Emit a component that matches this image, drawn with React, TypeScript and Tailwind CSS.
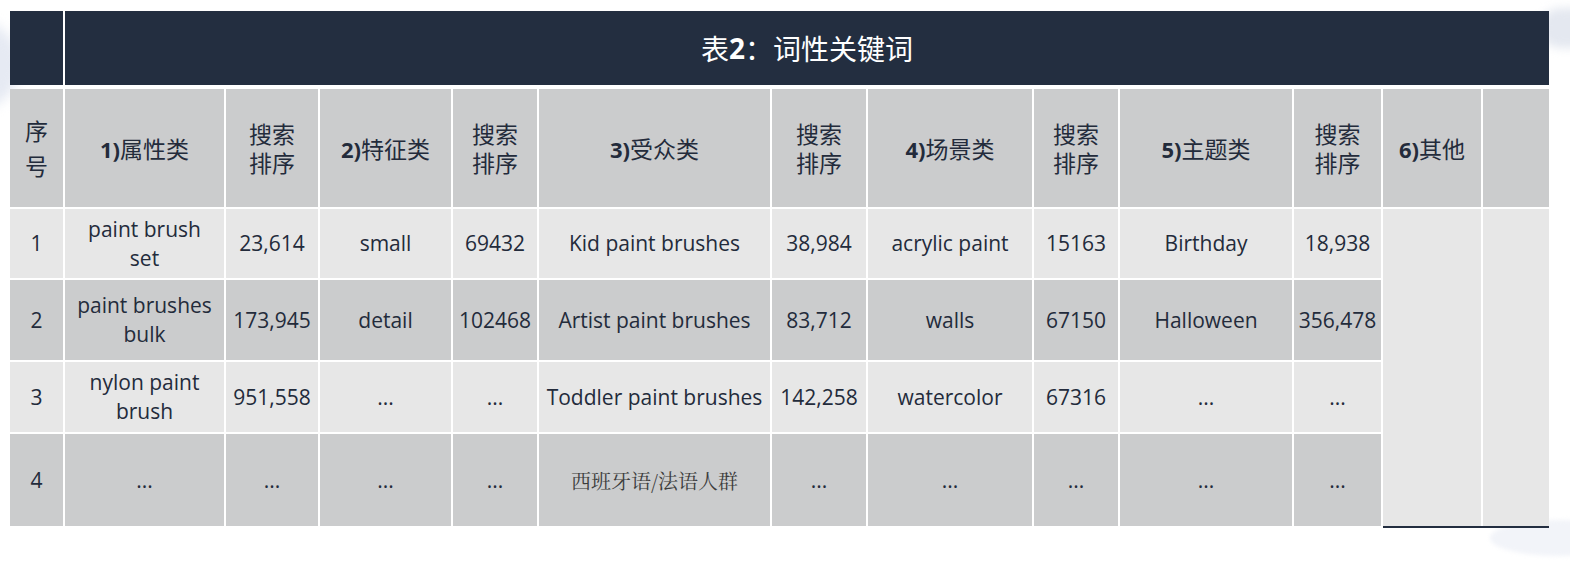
import React from "react";

const LATIN = "font-['Open_Sans','Noto_Sans_CJK_SC',sans-serif]";
const CJK = "font-['Noto_Sans_CJK_SC',sans-serif]";

const light = "bg-[#e7e7e7]";
const dark = "bg-[#cbcccd]";

type Row = { bg: string; cells: React.ReactNode[] };

const rows: Row[] = [
  {
    bg: light,
    cells: ["1", <>paint brush<br />set</>, "23,614", "small", "69432", "Kid paint brushes", "38,984", "acrylic paint", "15163", "Birthday", "18,938"],
  },
  {
    bg: dark,
    cells: ["2", <>paint brushes<br />bulk</>, "173,945", "detail", "102468", "Artist paint brushes", "83,712", "walls", "67150", "Halloween", "356,478"],
  },
  {
    bg: light,
    cells: ["3", <>nylon paint<br />brush</>, "951,558", "...", "...", "Toddler paint brushes", "142,258", "watercolor", "67316", "...", "..."],
  },
  {
    bg: dark,
    cells: [
      "4",
      "...",
      "...",
      "...",
      "...",
      <span className="font-['Noto_Serif_CJK_SC','Noto_Sans_CJK_SC',serif] text-[20px] text-[#3c3c3c]">西班牙语/法语人群</span>,
      "...",
      "...",
      "...",
      "...",
      "...",
    ],
  },
];

function HeaderLabel({ num, text }: { num: string; text: string }) {
  return (
    <span className="whitespace-nowrap">
      <span className={`${LATIN} font-bold text-[22px]`}>{num}</span>
      <span className={`${CJK} text-[23px]`}>{text}</span>
    </span>
  );
}

function SearchRank() {
  return (
    <div className={`${CJK} text-[23px] leading-[29px] text-center flex flex-col`}>
      <span>搜索</span>
      <span>排序</span>
    </div>
  );
}

export default function App() {
  const headerCell = `${dark} flex items-center justify-center text-[#232b3b] mt-[1px]`;
  return (
    <div className="relative w-[1570px] h-[568px] overflow-hidden bg-white">
      {/* faint decorative background shapes */}
      <div className="pointer-events-none absolute left-[-70px] top-[20px] w-[90px] h-[90px] rounded-full bg-[#e6eaf3] blur-[6px]" />
      <div className="pointer-events-none absolute right-[-40px] top-[8px] w-[70px] h-[40px] rounded-full bg-[#e4e8f0] blur-[5px]" />
      <div className="pointer-events-none absolute right-[-60px] top-[520px] w-[140px] h-[36px] rounded-[50%] bg-[#f2f4f9] blur-[2px]" />

      <div className="relative pl-[10px] pt-[11px]">
        <div
          className={`grid grid-cols-[53px_159px_92px_131px_84px_231px_94px_164px_84px_172px_87px_98px_66px] grid-rows-[75px_119px_69px_80px_70px_92px] gap-x-[2px] gap-y-[2px] w-[1539px] text-[#232b3b] ${LATIN}`}
        >
          {/* Title row */}
          <div className="bg-[#232e40] mb-[1px]" />
          <div className="col-span-12 bg-[#232e40] mb-[1px] flex items-center justify-center text-white text-[28px]">
            <span className={CJK}>表</span>
            <span className={`${LATIN} font-bold`}>2</span>
            <span className={CJK}>：词性关键词</span>
          </div>

          {/* Header row */}
          <div className={headerCell}>
            <div className={`${CJK} text-[23px] leading-[35px] text-center flex flex-col`}>
              <span>序</span>
              <span>号</span>
            </div>
          </div>
          <div className={headerCell}><HeaderLabel num="1)" text="属性类" /></div>
          <div className={headerCell}><SearchRank /></div>
          <div className={headerCell}><HeaderLabel num="2)" text="特征类" /></div>
          <div className={headerCell}><SearchRank /></div>
          <div className={headerCell}><HeaderLabel num="3)" text="受众类" /></div>
          <div className={headerCell}><SearchRank /></div>
          <div className={headerCell}><HeaderLabel num="4)" text="场景类" /></div>
          <div className={headerCell}><SearchRank /></div>
          <div className={headerCell}><HeaderLabel num="5)" text="主题类" /></div>
          <div className={headerCell}><SearchRank /></div>
          <div className={headerCell}><HeaderLabel num="6)" text="其他" /></div>
          <div className={headerCell} />

          {/* Body rows */}
          {rows.map((r, ri) =>
            r.cells.map((c, ci) => (
              <div
                key={`${ri}-${ci}`}
                className={`${r.bg} flex items-center justify-center text-center text-[21px] leading-[29px] whitespace-nowrap`}
                style={{ gridRow: ri + 3, gridColumn: ci + 1 }}
              >
                {c}
              </div>
            ))
          )}

          {/* Merged "other" columns */}
          <div className="col-start-12 col-span-2 row-start-3 row-span-4 flex gap-x-[2px] shadow-[0_2px_0_0_#232e40]">
            <div className={`${light} w-[98px]`} />
            <div className={`${light} w-[66px]`} />
          </div>
        </div>
      </div>
    </div>
  );
}
